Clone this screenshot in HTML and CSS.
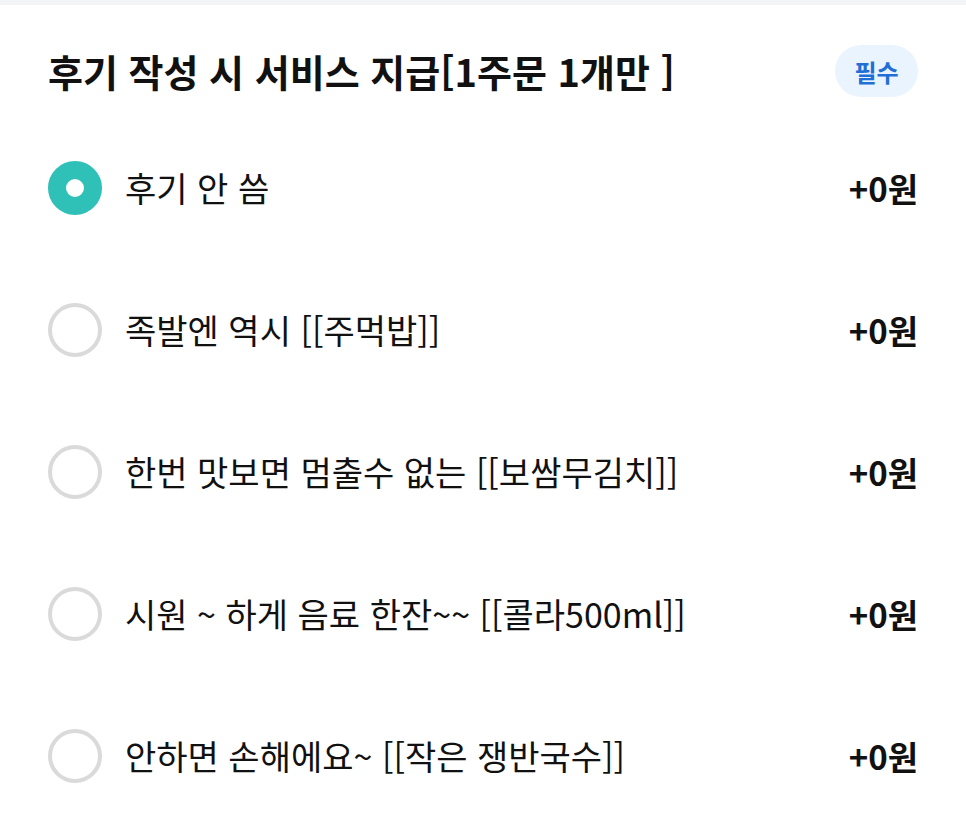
FILE: index.html
```html
<!DOCTYPE html>
<html lang="ko">
<head>
<meta charset="utf-8">
<link rel="stylesheet" href="styles.css">
</head>
<body>
<div class="strip"></div>
<section class="group">
  <header class="head">
    <h2 class="title">후기 작성 시 서비스 지급[1주문 1개만 ]</h2>
    <span class="badge">필수</span>
  </header>
  <ul class="options">
    <li class="option">
      <span class="radio checked"></span>
      <span class="label">후기 안 씀</span>
      <span class="price">+0원</span>
    </li>
    <li class="option">
      <span class="radio"></span>
      <span class="label">족발엔 역시 [[주먹밥]]</span>
      <span class="price">+0원</span>
    </li>
    <li class="option">
      <span class="radio"></span>
      <span class="label">한번 맛보면 멈출수 없는 [[보쌈무김치]]</span>
      <span class="price">+0원</span>
    </li>
    <li class="option">
      <span class="radio"></span>
      <span class="label">시원 ~ 하게 음료 한잔~~ [[콜라500ml]]</span>
      <span class="price">+0원</span>
    </li>
    <li class="option">
      <span class="radio"></span>
      <span class="label">안하면 손해에요~ [[작은 쟁반국수]]</span>
      <span class="price">+0원</span>
    </li>
  </ul>
</section>
</body>
</html>
```
FILE: styles.css
```css
* { box-sizing: border-box; }
html, body {
  margin: 0;
  padding: 0;
  background: #ffffff;
  font-family: "Noto Sans CJK KR", "Noto Sans", sans-serif;
  color: #111111;
}
.strip {
  height: 5px;
  background: #f3f4f6;
}
.group {
  padding: 0 48px;
}
.head {
  display: flex;
  align-items: center;
  justify-content: space-between;
  height: 92px;
  margin-top: 20px;
}
.title {
  margin: 0;
  font-size: 38px;
  font-weight: 700;
  letter-spacing: 0;
  line-height: 1;
}
.badge {
  display: flex;
  align-items: center;
  justify-content: center;
  width: 83px;
  height: 52px;
  border-radius: 26px;
  background: #eaf4fe;
  color: #1f6fd6;
  font-size: 24px;
  font-weight: 700;
}
.options {
  list-style: none;
  margin: 0;
  padding: 0;
}
.option {
  display: flex;
  align-items: center;
  height: 142px;
}
.radio {
  flex: none;
  width: 54px;
  height: 54px;
  border-radius: 50%;
  border: 4px solid #dadada;
  margin-right: 23px;
}
.radio.checked {
  border: 18px solid #2fc0b8;
  background: #ffffff;
}
.label {
  flex: 1;
  font-size: 34px;
  font-weight: 400;
  line-height: 1;
}
.price {
  font-size: 33px;
  font-weight: 700;
  line-height: 1;
  letter-spacing: 0;
}
```
